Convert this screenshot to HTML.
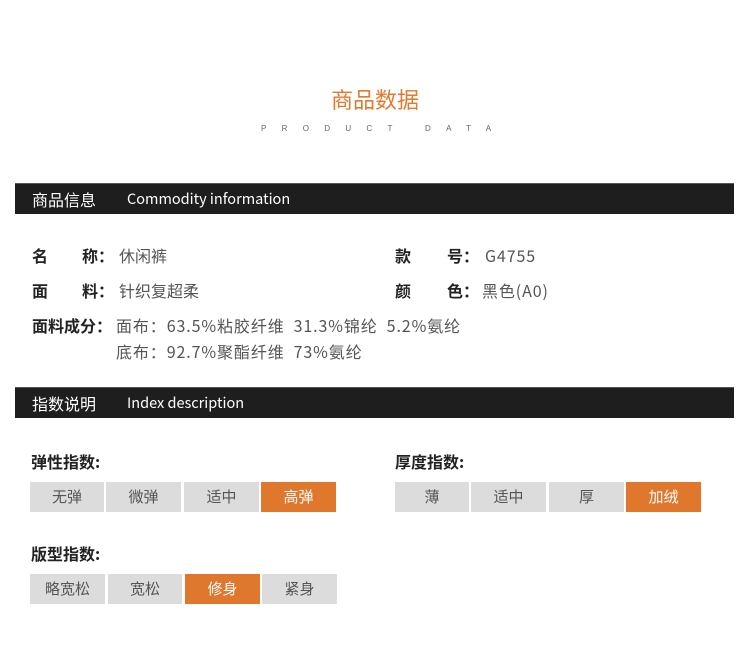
<!DOCTYPE html>
<html><head><meta charset="utf-8"><style>
*{margin:0;padding:0;box-sizing:border-box}
body{width:750px;height:649px;background:#fff;position:relative;overflow:hidden;font-family:"Noto Sans CJK SC","Liberation Sans",sans-serif}
.a{position:absolute;white-space:nowrap}
.title{left:0;width:750px;text-align:center;top:85px;font-size:22px;color:#e07a2f;line-height:28px}
.sub{left:261px;top:124px;font-size:8px;color:#666;letter-spacing:15.3px;line-height:10px;font-family:"Liberation Sans",sans-serif}
.bar{position:absolute;left:15px;width:719px;height:31px;background:#1e1e1e;border-top:1px solid #555;color:#fff}
.bar .cn{position:absolute;left:17px;top:4px;font-size:16px;line-height:22px}
.bar .en{position:absolute;left:112px;top:5px;font-size:14.5px;line-height:20px}
.lb{font-size:16px;color:#222;font-weight:bold;line-height:20px}
.v{font-size:16px;color:#555;line-height:20px}
.w{letter-spacing:0.9px}
.h{font-size:16px;color:#222;font-weight:bold;line-height:20px}
.b{position:absolute;height:30px;background:#dcdcdc;color:#555;font-size:15px;line-height:30px;text-align:center}
.b.o{background:#df782d;color:#fff}
</style></head><body>
<div class="a title">商品数据</div>
<div class="a sub">PRODUCT DATA</div>
<div class="bar" style="top:183px"><span class="cn">商品信息</span><span class="en">Commodity information</span></div>
<div class="a lb" style="left:32px;top:245px">名</div><div class="a lb" style="left:82px;top:245px">称：</div><div class="a v" style="left:119px;top:245px">休闲裤</div>
<div class="a lb" style="left:395px;top:245px">款</div><div class="a lb" style="left:447px;top:245px">号：</div><div class="a v w" style="left:485px;top:245px">G4755</div>
<div class="a lb" style="left:32px;top:280px">面</div><div class="a lb" style="left:82px;top:280px">料：</div><div class="a v" style="left:119px;top:280px">针织复超柔</div>
<div class="a lb" style="left:395px;top:280px">颜</div><div class="a lb" style="left:447px;top:280px">色：</div><div class="a v w" style="left:482px;top:280px">黑色(A0)</div>
<div class="a lb" style="left:32px;top:315px">面料成分：</div>
<div class="a v w" style="left:116px;top:315px">面布：63.5%粘胶纤维&nbsp;&nbsp;31.3%锦纶&nbsp;&nbsp;5.2%氨纶</div>
<div class="a v w" style="left:116px;top:341px">底布：92.7%聚酯纤维&nbsp;&nbsp;73%氨纶</div>
<div class="bar" style="top:387px"><span class="cn">指数说明</span><span class="en">Index description</span></div>
<div class="a h" style="left:31px;top:451px">弹性指数:</div>
<div class="a h" style="left:395px;top:451px">厚度指数:</div>
<div class="a h" style="left:31px;top:543px">版型指数:</div>
<div class="b" style="left:30px;top:482px;width:74px">无弹</div>
<div class="b" style="left:106px;top:482px;width:75px">微弹</div>
<div class="b" style="left:184px;top:482px;width:75px">适中</div>
<div class="b o" style="left:261px;top:482px;width:75px">高弹</div>
<div class="b" style="left:395px;top:482px;width:74px">薄</div>
<div class="b" style="left:471px;top:482px;width:75px">适中</div>
<div class="b" style="left:549px;top:482px;width:75px">厚</div>
<div class="b o" style="left:626px;top:482px;width:75px">加绒</div>
<div class="b" style="left:30px;top:574px;width:75px">略宽松</div>
<div class="b" style="left:108px;top:574px;width:74px">宽松</div>
<div class="b o" style="left:185px;top:574px;width:75px">修身</div>
<div class="b" style="left:262px;top:574px;width:75px">紧身</div>
</body></html>
